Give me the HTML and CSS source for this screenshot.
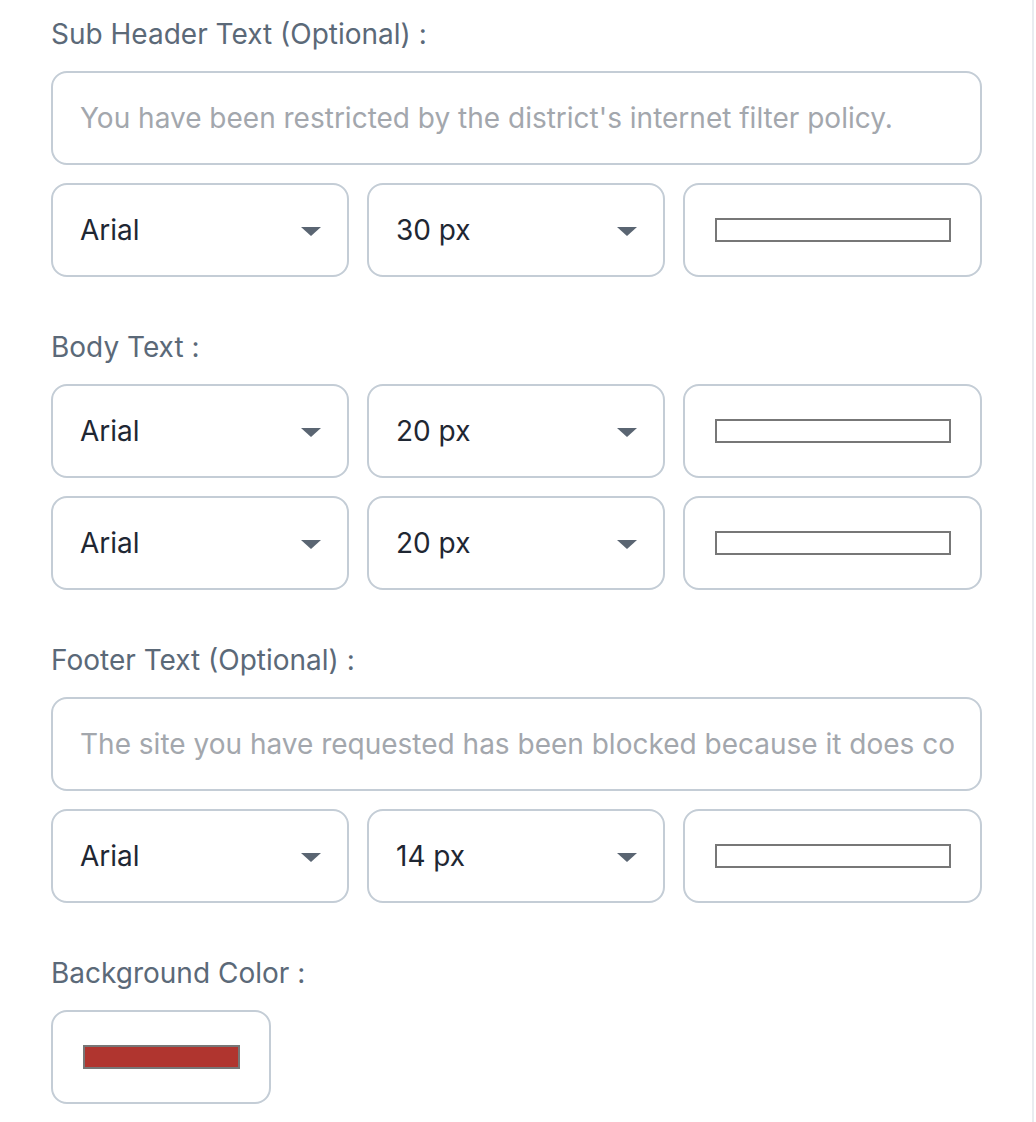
FILE: index.html
```html
<!DOCTYPE html>
<html lang="en">
<head>
  <meta charset="UTF-8">
  <meta name="viewport" content="width=device-width, initial-scale=1.0">
  <title>Block Page Settings</title>
  <link rel="stylesheet" href="styles.css">
</head>
<body>

  <div class="settings-panel">

    <!-- Sub header -->
    <div class="field-section">
      <label class="field-label" for="subheader-text">Sub Header Text (Optional) :</label>
      <input class="text-input" type="text" id="subheader-text" placeholder="You have been restricted by the district's internet filter policy.">
      <div class="style-row">
        <div class="select-box"><span>Arial</span><i class="caret"></i></div>
        <div class="select-box"><span>30 px</span><i class="caret"></i></div>
        <div class="color-box"><span class="swatch"></span></div>
      </div>
    </div>

    <!-- Body -->
    <div class="field-section">
      <div class="field-label">Body Text :</div>
      <div class="style-row">
        <div class="select-box"><span>Arial</span><i class="caret"></i></div>
        <div class="select-box"><span>20 px</span><i class="caret"></i></div>
        <div class="color-box"><span class="swatch"></span></div>
      </div>
      <div class="style-row">
        <div class="select-box"><span>Arial</span><i class="caret"></i></div>
        <div class="select-box"><span>20 px</span><i class="caret"></i></div>
        <div class="color-box"><span class="swatch"></span></div>
      </div>
    </div>

    <!-- Footer -->
    <div class="field-section">
      <label class="field-label" for="footer-text">Footer Text (Optional) :</label>
      <input class="text-input" type="text" id="footer-text" placeholder="The site you have requested has been blocked because it does contain content that is not allowed.">
      <div class="style-row">
        <div class="select-box"><span>Arial</span><i class="caret"></i></div>
        <div class="select-box"><span>14 px</span><i class="caret"></i></div>
        <div class="color-box"><span class="swatch"></span></div>
      </div>
    </div>

    <!-- Page background -->
    <div class="field-section">
      <div class="field-label">Background Color :</div>
      <div class="color-box bg-color"><span class="swatch swatch-red"></span></div>
    </div>

  </div>

</body>
</html>
```

FILE: styles.css
```css
/* Basic Reset */
* {
  margin: 0;
  padding: 0;
  box-sizing: border-box;
}

body {
  font-family: Inter, "Noto Sans", sans-serif;
  background: #fff;
  width: 1036px;
  height: 1122px;
  overflow: hidden;
}

/* Panel with a light divider on the right */
.settings-panel {
  width: 1034px;
  height: 1122px;
  padding: 16px 50px 0 51px;
  border-right: 2px solid #e9ecf0;
  display: flex;
  flex-direction: column;
  gap: 52px;
}

.field-section {
  display: flex;
  flex-direction: column;
  gap: 18px;
}

.field-label {
  display: block;
  font-size: 28px;
  line-height: 36px;
  color: #5b6978;
  margin-bottom: 1px;
}

/* Text inputs */
.text-input {
  width: 931px;
  height: 94px;
  padding: 0 26px 0 27px;
  border: 2px solid #c4cdd6;
  border-radius: 16px;
  font-family: inherit;
  font-size: 28px;
  color: #1f2733;
  outline: none;
  background: #fff;
}

.text-input::placeholder {
  color: #a3a7ad;
}

/* Font / size / colour row */
.style-row {
  display: grid;
  grid-template-columns: 298px 298px 299px;
  gap: 18px;
}

.select-box {
  height: 94px;
  border: 2px solid #c4cdd6;
  border-radius: 16px;
  display: flex;
  align-items: center;
  justify-content: space-between;
  padding: 0 26px 0 27px;
  font-size: 28px;
  color: #1f2733;
}

.caret {
  width: 0;
  height: 0;
  border-left: 10px solid transparent;
  border-right: 10px solid transparent;
  border-top: 9px solid #5a6572;
  margin-top: 2px;
}

.color-box {
  height: 94px;
  border: 2px solid #c4cdd6;
  border-radius: 16px;
  display: flex;
  align-items: center;
  justify-content: center;
}

.swatch {
  display: block;
  width: 236px;
  height: 24px;
  border: 2px solid #777;
  background: #fff;
}

/* Background colour picker */
.bg-color {
  width: 220px;
}

.swatch-red {
  width: 157px;
  background: #b0352f;
}
```
